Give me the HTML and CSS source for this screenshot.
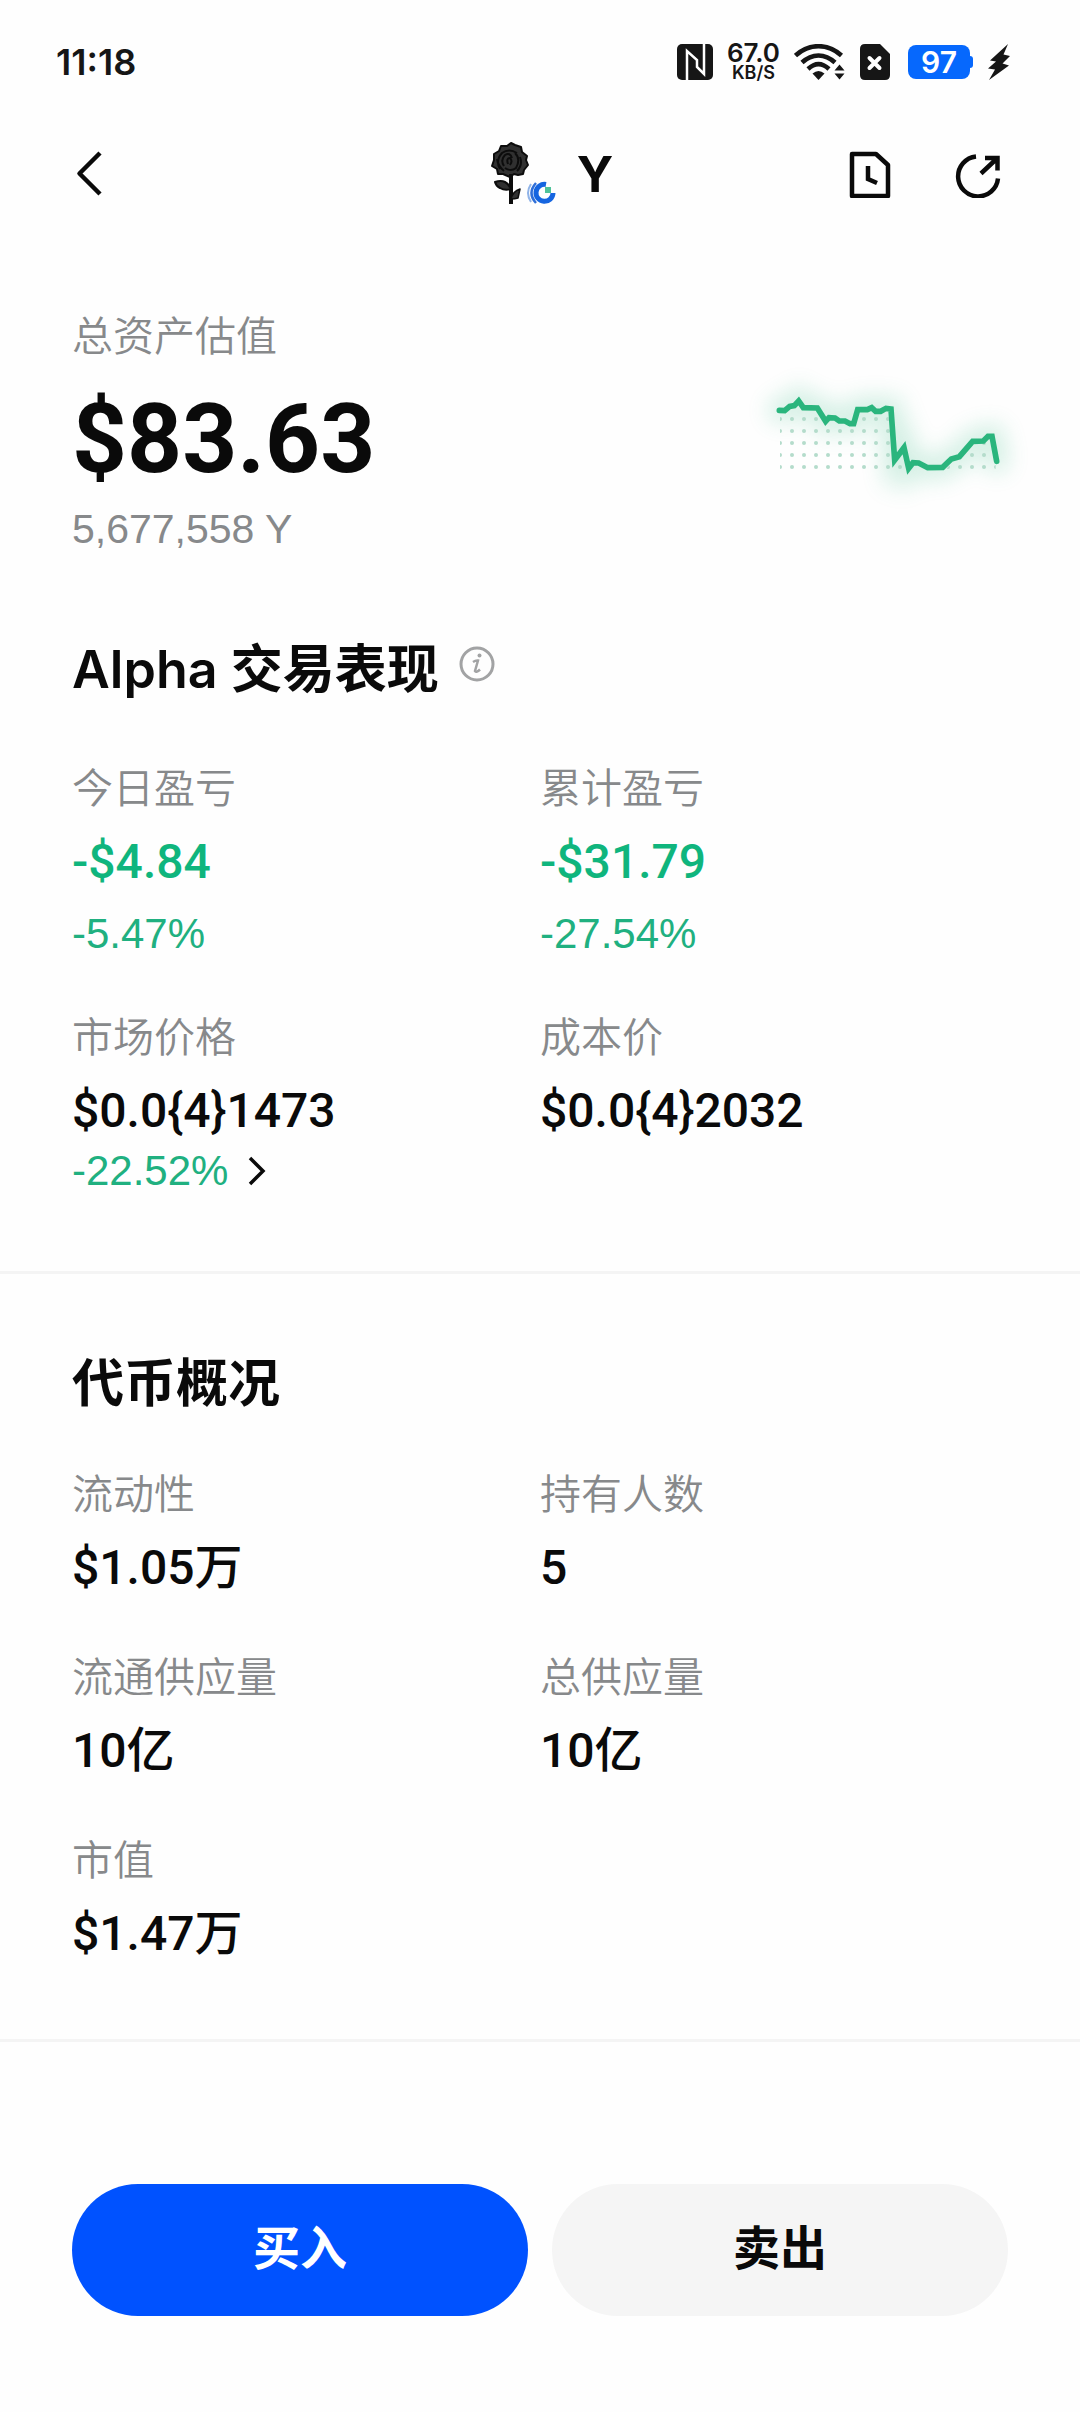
FILE: index.html
```html
<!DOCTYPE html>
<html lang="zh-CN">
<head>
    <meta charset="UTF-8">
    <meta name="viewport" content="width=device-width, initial-scale=1.0">
    <title>Y</title>
    <link rel="stylesheet" href="styles.css">
</head>
<body>

    <!-- Status bar -->
    <div class="status-bar">
        <span class="time">11:18</span>
        <div class="status-icons">
            <svg width="36" height="36" viewBox="0 0 36 36">
                <rect width="36" height="36" rx="5" fill="#161616"/>
                <path d="M10 36V7L20 16V23L27 30V0" fill="none" stroke="#fff" stroke-width="2.5"/>
            </svg>
            <div class="net-speed"><span>67.0</span><small>KB/S</small></div>
            <svg width="52" height="36" viewBox="0 0 52 36">
                <g fill="none" stroke="#161616" stroke-width="4.5">
                    <path d="M1.5 11.5C15 -1 34 -1 47.5 11.5"/>
                    <path d="M8 18.5C18 9 31 9 41 18.5"/>
                    <path d="M14 25C21 18.5 28 18.5 35 25"/>
                </g>
                <path d="M18.5 29.5Q24.5 24.5 30.5 29.5L24.5 36Z" fill="#161616"/>
                <path d="M45.5 20.5L50.5 26.5H40.5ZM45.5 35.5L50.5 29.5H40.5Z" fill="#161616"/>
            </svg>
            <svg width="30" height="36" viewBox="0 0 30 36">
                <path d="M5 0H20L30 10V31Q30 36 25 36H5Q0 36 0 31V5Q0 0 5 0Z" fill="#161616"/>
                <path d="M9.5 14L19.5 24M19.5 14L9.5 24" stroke="#fff" stroke-width="4" stroke-linecap="round"/>
            </svg>
            <div class="battery">97</div>
            <svg width="22" height="36" viewBox="0 0 22 36">
                <path d="M20 0L2 16.5L8 17.5L0 24.5L7 25.5L1 36L21 21.5L14.5 19.5L22 12L15.5 10.5Z" fill="#161616"/>
            </svg>
        </div>
    </div>

    <!-- Nav -->
    <header class="nav">
        <button class="icon-btn" aria-label="返回">
            <svg width="48" height="48" viewBox="0 0 48 48" fill="none" stroke="#0a0a0a" stroke-width="4.5">
                <path d="M28 3L7.5 23.5L28 44" stroke-linejoin="round"/>
            </svg>
        </button>
        <div class="token">
            <svg width="66" height="66" viewBox="0 0 66 66">
                <g stroke="#0c0c0c" stroke-linejoin="round">
                    <path d="M20 2L24 4L30 6L31 11L36 15L35 19L37 24L33 29L32 33L27 34L23 33L19 36L12 33L7 33L6 28L1 25L3 19L3 13L8 10L10 5L16 5Z" fill="#303030" stroke-width="2"/>
                    <path d="M9 28Q4 20 11 12Q18 7 26 12M13 25Q9 19 14 14Q19 11 21 17M24 12Q30 18 25 27Q20 31 14 27M17 23Q15 17 19 17Q22 20 19 24M29 16Q32 24 26 30M6 18Q7 25 13 30" fill="none" stroke-width="2"/>
                    <path d="M20 33V63" stroke-width="4" fill="none"/>
                    <path d="M20 48Q14 50 9 47Q5 45 4 41Q10 39 14 41Q18 43 20 48Z" fill="#303030" stroke-width="2"/>
                    <path d="M20 58Q22 50 29 48L27 57Q24 58 20 58Z" fill="#303030" stroke-width="1.5"/>
                </g>
                <g fill="none">
                    <path d="M40 43Q34 52 40 61" stroke="#8fb3e8" stroke-width="2"/>
                    <path d="M45 42Q36 52 45 62" stroke="#2f6fd8" stroke-width="2.5"/>
                    <path d="M55 43.5A8.5 8.5 0 1 0 62 52" stroke="#1565e0" stroke-width="5"/>
                </g>
                <rect x="54" y="46" width="6" height="6" fill="#4fc39a"/>
            </svg>
            <h1>Y</h1>
        </div>
        <div class="nav-actions">
            <button class="icon-btn" aria-label="历史记录">
                <svg width="48" height="48" viewBox="0 0 48 48" fill="none" stroke="#0a0a0a" stroke-width="4.5">
                    <path d="M6 4H30L42 15V46H6Z" stroke-linejoin="round"/>
                    <path d="M22 16V29L31 33"/>
                </svg>
            </button>
            <button class="icon-btn" aria-label="分享">
                <svg width="48" height="48" viewBox="0 0 48 48" fill="none" stroke="#0a0a0a" stroke-width="4.5">
                    <path d="M22 6.5A20 20 0 1 0 44 28.5"/>
                    <path d="M27 23.5L43.5 8M31 8H43.5V20.5"/>
                </svg>
            </button>
        </div>
    </header>

    <main>
        <section class="assets">
            <div>
                <p class="label">总资产估值</p>
                <p class="total">$83.63</p>
                <p class="label">5,677,558 Y</p>
            </div>
            <svg class="chart" width="240" height="146" viewBox="54 0 720 438" aria-label="走势图">
                <defs>
                    <filter id="glow" x="-20%" y="-60%" width="140%" height="220%">
                        <feGaussianBlur stdDeviation="34"/>
                    </filter>
                    <pattern id="dots" x="72" y="159" width="36" height="36" patternUnits="userSpaceOnUse">
                        <circle cx="18" cy="18" r="6" fill="#b4dccb"/>
                    </pattern>
                </defs>
                <path class="chart-glow" filter="url(#glow)" d="M88 151L104 152L119 139L133 137L146 123L160 143L202 144L227 184L247 171L300 188L311 188L323 149L352 149L365 143L385 154L408 145L423 147L434 300L462 263L476 325L489 308L506 309L533 323L578 322L604 297L628 290L668 244L700 243L714 229L726 229L740 304"/>
                <path fill="url(#dots)" d="M90 160L205 160L227 195L247 185L300 200L320 165L415 160L428 305L462 300L476 330H90ZM586 330L604 310L628 302L668 256L714 245L737 304V330Z"/>
                <path class="chart-line" d="M88 151L104 152L119 139L133 137L146 123L160 143L202 144L227 184L237 173L255 174L268 183L285 183L300 191L311 191L323 149L352 149L365 143L377 154L392 154L408 145L423 147L434 300L462 263L476 325L489 308L506 309L533 323L578 322L604 297L628 290L668 244L700 243L714 229L726 229L740 304"/>
            </svg>
        </section>

        <section class="performance">
            <div class="title-row">
                <h2>Alpha 交易表现</h2>
                <button class="info-btn" aria-label="说明">
                    <svg width="36" height="36" viewBox="0 0 36 36" fill="none" stroke="#a2a3a4">
                        <circle cx="18" cy="18" r="16" stroke-width="3"/>
                        <path d="M14 16Q17 14 19 14.5L16 25Q17.5 27 21 23.5" stroke-width="2.5"/>
                        <circle cx="20.5" cy="9.5" r="2" fill="#a2a3a4" stroke="none"/>
                    </svg>
                </button>
            </div>
            <div class="grid">
                <div class="item">
                    <p class="label">今日盈亏</p>
                    <p class="value green">-$4.84</p>
                    <p class="rate">-5.47%</p>
                </div>
                <div class="item">
                    <p class="label">累计盈亏</p>
                    <p class="value green">-$31.79</p>
                    <p class="rate">-27.54%</p>
                </div>
                <div class="item">
                    <p class="label">市场价格</p>
                    <p class="value">$0.0{4}1473</p>
                    <a class="rate-link" href="#">-22.52%
                        <svg width="18" height="30" viewBox="0 0 18 30" fill="none" stroke="#0a0a0a" stroke-width="3.5">
                            <path d="M2 2L15 15L2 28"/>
                        </svg>
                    </a>
                </div>
                <div class="item">
                    <p class="label">成本价</p>
                    <p class="value">$0.0{4}2032</p>
                </div>
            </div>
        </section>

        <section class="overview">
            <h2>代币概况</h2>
            <div class="grid">
                <div class="item">
                    <p class="label">流动性</p>
                    <p class="value">$1.05万</p>
                </div>
                <div class="item">
                    <p class="label">持有人数</p>
                    <p class="value">5</p>
                </div>
                <div class="item">
                    <p class="label">流通供应量</p>
                    <p class="value">10亿</p>
                </div>
                <div class="item">
                    <p class="label">总供应量</p>
                    <p class="value">10亿</p>
                </div>
                <div class="item">
                    <p class="label">市值</p>
                    <p class="value">$1.47万</p>
                </div>
            </div>
        </section>
    </main>

    <footer class="actions">
        <button class="btn btn-buy">买入</button>
        <button class="btn btn-sell">卖出</button>
    </footer>

</body>
</html>
```

FILE: styles.css
```css
* {
    box-sizing: border-box;
}

body {
    margin: 0;
    min-height: 100vh;
    display: flex;
    flex-direction: column;
    background-color: #fefefe;
    color: #0a0a0a;
    font-family: Roboto, "Noto Sans CJK SC", sans-serif;
}

h1, h2, p {
    margin: 0;
}

button {
    padding: 0;
    border: none;
    background: none;
    font-family: inherit;
    cursor: pointer;
}

svg {
    display: block;
    flex-shrink: 0;
}

/* Status bar */
.status-bar {
    display: flex;
    justify-content: space-between;
    align-items: center;
    height: 124px;
    padding: 0 70px 0 56px;
    color: #161616;
    font-family: Inter, sans-serif;
    font-weight: 600;
}

.time {
    font-size: 36px;
}

.status-icons {
    display: flex;
    align-items: center;
    gap: 14px;
}

.net-speed {
    display: flex;
    flex-direction: column;
    align-items: center;
    font-size: 26px;
    line-height: 22px;
}

.net-speed small {
    font-size: 18px;
    line-height: 18px;
}

.battery {
    position: relative;
    width: 62px;
    margin: 0 4px;
    border-radius: 8px;
    background-color: #0668fd;
    color: #fff;
    font-size: 30px;
    line-height: 34px;
    text-align: center;
}

.battery::after {
    content: '';
    position: absolute;
    top: 11px;
    right: -3px;
    width: 4px;
    height: 12px;
    border-radius: 0 3px 3px 0;
    background-color: #0668fd;
}

/* Nav */
.nav {
    display: grid;
    grid-template-columns: 1fr auto 1fr;
    align-items: center;
    height: 100px;
    padding: 0 78px 0 72px;
}

.icon-btn {
    width: 48px;
    height: 48px;
}

.token {
    display: flex;
    align-items: center;
    gap: 20px;
    padding-left: 30px;
}

h1 {
    font-family: Inter, sans-serif;
    font-size: 50px;
    font-weight: 700;
    line-height: 72px;
}

.nav-actions {
    display: flex;
    justify-content: flex-end;
    gap: 60px;
}

/* Content */
section {
    padding: 0 72px;
}

.label {
    color: #87898b;
    font-family: "Liberation Sans", "Noto Sans CJK SC", sans-serif;
    font-size: 41px;
    font-weight: 350;
    line-height: 60px;
}

h2 {
    font-family: Inter, "Noto Sans CJK SC", sans-serif;
    font-size: 52px;
    font-weight: 600;
    line-height: 72px;
}

.value {
    margin-top: 13px;
    font-size: 48px;
    font-weight: 500;
    line-height: 60px;
}

.green {
    color: #0fb57d;
}

.rate {
    margin-top: 12px;
    color: #20b080;
    font-family: "Liberation Sans", sans-serif;
    font-size: 42px;
    line-height: 60px;
}

.rate-link {
    display: flex;
    align-items: center;
    gap: 20px;
    color: #20b080;
    font-family: "Liberation Sans", sans-serif;
    font-size: 42px;
    line-height: 60px;
    text-decoration: none;
}

.grid {
    display: grid;
    grid-template-columns: 1fr 1fr;
}

.assets {
    display: flex;
    justify-content: space-between;
    align-items: center;
    padding-top: 83px;
}

.total {
    margin: 24px 0 12px;
    font-size: 96px;
    font-weight: 700;
    line-height: 96px;
}

.chart {
    overflow: visible;
}

.chart-line, .chart-glow {
    fill: none;
    stroke: #2ab57d;
    stroke-width: 17;
    stroke-linecap: round;
}

.chart-glow {
    stroke-width: 70;
    opacity: 0.2;
}

.performance {
    padding-top: 75px;
    padding-bottom: 70px;
    border-bottom: 3px solid #f4f4f4;
}

.performance .grid {
    margin-top: 53px;
    row-gap: 44px;
}

.title-row {
    display: flex;
    align-items: flex-start;
    gap: 20px;
}

.info-btn {
    width: 36px;
    padding: 12px 0;
}

.overview {
    padding-top: 74px;
    padding-bottom: 75px;
    border-bottom: 3px solid #f4f4f4;
}

.overview .grid {
    margin-top: 45px;
    row-gap: 50px;
}

/* Bottom buttons */
.actions {
    display: flex;
    gap: 24px;
    margin-top: auto;
    padding: 24px 72px 96px;
}

.btn {
    flex: 1;
    height: 132px;
    border-radius: 66px;
    font-size: 47px;
    font-weight: 600;
    line-height: 60px;
    padding-bottom: 3px;
}

.btn-buy {
    background-color: #0052ff;
    color: #fff;
}

.btn-sell {
    background-color: #f5f5f5;
    color: #0a0a0a;
}
```
